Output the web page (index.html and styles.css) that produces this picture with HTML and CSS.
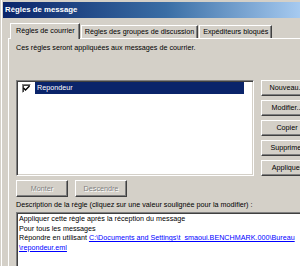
FILE: index.html
```html
<!DOCTYPE html>
<html lang="fr">
<head>
<meta charset="utf-8">
<title>Règles de message</title>
<link rel="stylesheet" href="styles.css">
</head>
<body>
<div class="window">
  <div class="titlebar">Règles de message</div>
  <div class="client">
    <div class="tabs">
      <div class="tab selected">Règles de courrier</div>
      <div class="tab">Règles des groupes de discussion</div>
      <div class="tab">Expéditeurs bloqués</div>
    </div>
    <div class="panel">
      <p class="intro">Ces règles seront appliquées aux messages de courrier.</p>
      <div class="rules-row">
        <div class="list">
          <div class="item">
            <span class="check"><svg width="7" height="7" viewBox="0 0 7 7"><path d="M0.5 3 L2.5 5 L6.5 1" fill="none" stroke="#000" stroke-width="1.4"/></svg></span>
            <span class="item-label">Repondeur</span>
          </div>
        </div>
        <div class="side-buttons">
          <div class="btn">Nouveau...</div>
          <div class="btn">Modifier...</div>
          <div class="btn">Copier</div>
          <div class="btn">Supprimer</div>
          <div class="btn">Appliquer</div>
        </div>
      </div>
      <div class="move-buttons">
        <div class="btn disabled">Monter</div>
        <div class="btn disabled">Descendre</div>
      </div>
      <div class="desc-label">Description de la règle (cliquez sur une valeur soulignée pour la modifier) :</div>
      <div class="desc-box">
        <div>Appliquer cette règle après la réception du message</div>
        <div>Pour tous les messages</div>
        <div>Répondre en utilisant <a class="link">C:\Documents and Settings\t_smaoui.BENCHMARK.000\Bureau<br>\repondeur.eml</a></div>
      </div>
    </div>
  </div>
</div>
</body>
</html>
```
FILE: styles.css
```css
html, body {
  margin: 0;
  padding: 0;
}
body {
  width: 300px;
  height: 266px;
  overflow: hidden;
  background: #d4d0c8;
  font-family: "Liberation Sans", Arial, sans-serif;
  font-size: 7.2px;
  color: #000;
}
.window {
  width: 300px;
  height: 266px;
  overflow: hidden;
  padding: 2px 0 0 3px;
  box-sizing: border-box;
  background: linear-gradient(to right, #d4d0c8 0 1px, #ffffff 1px 2px, #d4d0c8 2px);
}
.titlebar {
  height: 16px;
  line-height: 15px;
  padding-left: 2px;
  background: linear-gradient(to right, #0a246a 0%, #3a6ea5 55%, #a6caf0 100%);
  color: #fff;
  font-weight: bold;
  font-size: 7.8px;
  white-space: nowrap;
}
.client {
  padding-left: 5px;
}
.tabs {
  display: flex;
  align-items: flex-end;
  height: 15px;
  margin-top: 5px;
  padding-left: 2px;
  white-space: nowrap;
}
.tab {
  height: 13px;
  line-height: 12px;
  padding: 0 3px 0 3px;
  border-top: 1px solid #fff;
  border-left: 1px solid #fff;
  border-right: 1px solid #404040;
  box-shadow: inset -1px 0 #808080;
  box-sizing: border-box;
  flex-shrink: 0;
}
.tab + .tab {
  margin-left: 1px;
}
.tab.selected {
  height: 16px;
  line-height: 13px;
  margin-bottom: -1px;
  padding: 0 4px 0 5px;
  background: #d4d0c8;
  position: relative;
  z-index: 1;
}
.panel {
  border-top: 1px solid #fff;
  border-left: 1px solid #fff;
  padding-left: 7px;
  height: 240px;
}
.intro {
  margin: 4px 0 0 0;
  line-height: 9px;
  white-space: nowrap;
}
.rules-row {
  display: flex;
  gap: 7px;
  margin-top: 28px;
}
.list {
  flex: 0 0 238px;
  width: 238px;
  height: 96px;
  box-sizing: border-box;
  background: #fff;
  border-style: solid;
  border-width: 1px;
  border-color: #808080 #fff #fff #808080;
  box-shadow: inset 1px 1px #404040, inset -1px -1px #d4d0c8;
  padding: 1px 0 0 1px;
}
.item {
  display: flex;
  align-items: center;
  height: 12px;
}
.check {
  flex: 0 0 9px;
  width: 9px;
  height: 9px;
  box-sizing: border-box;
  margin: 0 4px 0 4px;
  background: #fff;
  border-style: solid;
  border-width: 1px;
  border-color: #808080 #fff #fff #808080;
  box-shadow: inset 1px 1px #404040;
  display: flex;
  align-items: center;
  justify-content: center;
}
.check svg {
  display: block;
}
.item-label {
  flex: 0 0 209px;
  width: 209px;
  height: 12px;
  line-height: 12px;
  padding-left: 2px;
  box-sizing: border-box;
  background: #0a246a;
  color: #fff;
}
.side-buttons {
  display: flex;
  flex-direction: column;
  gap: 4px;
  flex-shrink: 0;
}
.btn {
  flex-shrink: 0;
  width: 52px;
  height: 16px;
  line-height: 14px;
  box-sizing: border-box;
  text-align: center;
  white-space: nowrap;
  overflow: hidden;
  background: #d4d0c8;
  border-style: solid;
  border-width: 1px;
  border-color: #fff #404040 #404040 #fff;
  box-shadow: inset -1px -1px #808080;
}
.move-buttons {
  display: flex;
  gap: 7px;
  margin-top: 4px;
}
.move-buttons .btn {
  height: 17px;
  line-height: 15px;
}
.btn.disabled {
  color: #808080;
  text-shadow: 1px 1px #fff;
}
.desc-label {
  margin-top: 3px;
  line-height: 9px;
  white-space: nowrap;
}
.desc-box {
  margin-top: 3px;
  width: 285px;
  height: 55px;
  box-sizing: border-box;
  background: #fff;
  border-style: solid;
  border-width: 1px 0 0 1px;
  border-color: #808080;
  box-shadow: inset 1px 1px #404040;
  padding: 1px 0 0 2px;
  line-height: 9.6px;
  white-space: nowrap;
  overflow: hidden;
}
.link {
  color: #0000ff;
  text-decoration: underline;
}
```
